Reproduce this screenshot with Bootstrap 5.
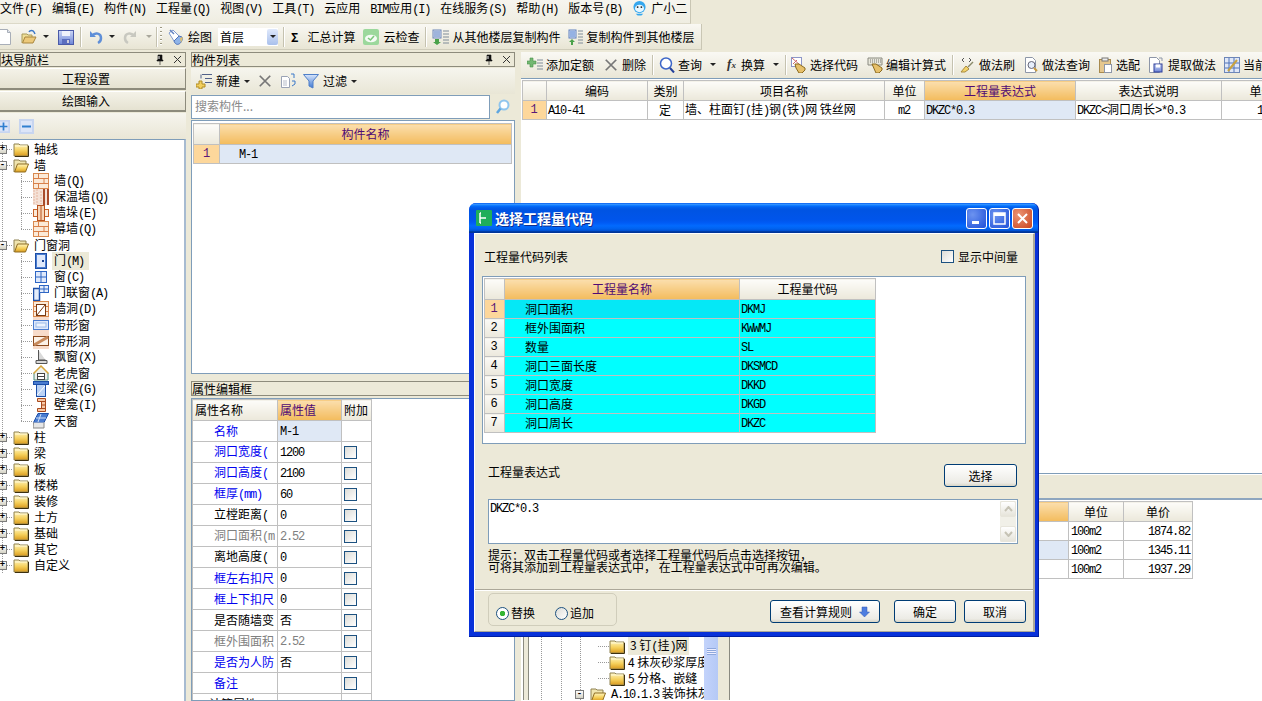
<!DOCTYPE html>
<html lang="zh">
<head>
<meta charset="utf-8">
<title>选择工程量代码</title>
<link href="https://cdn.jsdelivr.net/npm/bootstrap@5.3.0/dist/css/bootstrap.min.css" rel="stylesheet">
<style>
html,body{margin:0;height:701px;width:1262px;overflow:hidden}
body{background:#ece9d8;color:#000;font:12px/16px "Noto Sans CJK SC","Noto Sans CJK JP",sans-serif}
.la{font-family:"Liberation Mono",monospace;letter-spacing:-1.2px;font-size:12px}
svg{display:block;flex:none}
.defs{width:0;height:0;overflow:hidden}
.desk{height:701px;width:1262px;overflow:hidden}
.menubar{height:24px;width:691px;gap:10px;background:linear-gradient(#f6f5ef,#efede1);border-right:1px solid #c9c6b4;border-bottom:1px solid #dcd9c8;white-space:nowrap}
.tbar1{height:26px;width:702px;background:linear-gradient(#f9f8f3,#e8e5d4);border-right:1px solid #c9c6b4;border-bottom:1px solid #d0cdbb;white-space:nowrap}
.l2{margin-left:2px}.l3{margin-left:3px}.l4{margin-left:4px}.l5{margin-left:5px}.l6{margin-left:6px}.l7{margin-left:7px}.l8{margin-left:8px}.l9{margin-left:9px}.l10{margin-left:10px}.l11{margin-left:11px}.l14{margin-left:14px}.l20{margin-left:20px}
.n3{margin-left:-3px}
.tri{flex:none;width:0;height:0;border:3px solid transparent;border-top:3px solid #222;border-bottom:0}
.tri.off{border-top-color:#a9a79c}
.vsep{flex:none;width:2px;height:20px;border-left:1px solid #c5c2b0;border-right:1px solid #fff}
.grip{flex:none;width:2px;height:20px;background:repeating-linear-gradient(#9b9880 0 1px,#fff 1px 2px,transparent 2px 4px)}
.floorsel{width:60px;height:18px;background:#fff;padding-left:2px;flex:none}
.floorsel b{margin-left:auto;width:11px;height:16px;background:linear-gradient(#dfe8fb,#a9c0ec);border-radius:2px}
.main{height:649px;margin-top:2px}
.colL{width:186px;flex:none}
.colM{width:324px;flex:none;margin-left:5px}
.colR{flex:1 1 0;min-width:0;margin-left:6px}
.phd{height:15px;line-height:13px;border:1px solid #8d8b7c;background:#ece9d8;white-space:nowrap;overflow:hidden;flex:none}
.phd .pg{margin-left:auto;margin-right:3px}
.nbtn{height:22px;flex:none;width:186px;margin-top:1px;border:0;border-right:1px solid #8d8b7c;border-bottom:2px solid #8d8b7c;border-top:1px solid #fff;background:linear-gradient(#f4f2e8,#e5e2d1);font:inherit;line-height:18px;padding:0 13px 0 0;text-align:center}
.nbtn+.nbtn{height:21px}
.tool2{height:26px;flex:none;background:linear-gradient(#f6f5ee,#e9e6d6);margin-top:1px}
.treebox{border-top:1px solid #7f9db9;border-right:2px solid #a7bbd1;background:#fff;flex:1 1 0;min-height:0;overflow:hidden;padding-top:1px}
.tree{margin:0;padding:0;list-style:none;background:repeating-linear-gradient(0deg,#999 0 1px,transparent 1px 2px) 2px 0/1px 100% no-repeat}
.tw{height:16px;white-space:nowrap}
.exp{flex:none;width:9px;height:9px;margin-left:-2px;border:1px solid #7c7c7c;background:linear-gradient(#fff,#d5d3c5);font:700 9px/7px "Liberation Mono",monospace;text-align:center;color:#000}
.dash{flex:none;width:6px;height:1px;background:repeating-linear-gradient(90deg,#999 0 1px,transparent 1px 2px)}
.dash.dw{width:11px}
.cn{flex:none;width:12px;height:16px;margin-left:21px;background:repeating-linear-gradient(90deg,#999 0 1px,transparent 1px 2px) 0 8px/100% 1px no-repeat,repeating-linear-gradient(0deg,#999 0 1px,transparent 1px 2px) 0 0/1px 100% no-repeat}
.cn.end{background:repeating-linear-gradient(90deg,#999 0 1px,transparent 1px 2px) 0 8px/100% 1px no-repeat,repeating-linear-gradient(0deg,#999 0 1px,transparent 1px 2px) 0 0/1px 8px no-repeat}
.lbl{margin-left:5px}
.lbl.sel{background:#ecead8;margin-left:3px;padding:0 2px;width:37px}
.tw>svg+.root{margin-left:5px}
.gbox{border:1px solid #7f9db9;background:#fff;overflow:hidden}
table.xg{margin:0;width:1px;table-layout:fixed;border-collapse:collapse;--bs-table-bg:transparent;--bs-table-color:#000;color:#000}
table.xg th,table.xg td{padding:0 2px;border:1px solid #c0c0c0;font-weight:400;box-shadow:none;white-space:nowrap;overflow:hidden;line-height:14px;vertical-align:middle}
table.xg th{background:linear-gradient(#fdfcf9,#ebe8da);text-align:center}
table.xg th.act{background:linear-gradient(#fbdfae,#f3bb5c);color:#4f0a75}
table.xg td.num{background:linear-gradient(#fbfaf6,#ebe8dc);text-align:center;font-family:"Liberation Mono",monospace}
table.xg td.numa{background:#fdd79b;text-align:center;color:#5a1878;font-family:"Liberation Mono",monospace}
table.xg td.cur{background:#dfe8f5}
table.xg td.cy{background:#0ff}
table.xg td.cys{background:#05e8f6}
.pad1{padding-left:19px!important}
.pad2{padding-left:20px!important}
.srch{height:24px;flex:none;margin-top:1px}
.srch input{flex:1 1 0;height:24px;border:1px solid #7f9db9;border-radius:0;padding:0 3px 3px;font-size:12px;line-height:16px;min-height:0;box-shadow:none;color:#8a8a8a}
.srch input::placeholder{color:#8a8a8a}
.sbt{width:25px;flex:none}
.gridM{margin-top:1px;height:254px;flex:none;padding:2px 2px 0 1px}
.gridM table.xg th{height:21px}
.gridM table.xg td{height:19px}
.propbar{height:15px;margin-top:7px;flex:none;line-height:13px}
.gridP{margin-top:2px;flex:1 1 0;min-height:0;padding:0}
table.pt th,table.pt td{height:21px;padding:0 2px}
.nmc{display:block;width:61px;overflow:hidden;margin-left:19px}
.blue{color:#0000f0}
.gray{color:#808080}
input.xchk[type=checkbox]{flex:none;display:block;width:13px;height:13px;margin:0;border:1px solid #1c5180;border-radius:0;background:linear-gradient(135deg,#dcdcd7,#fff);box-shadow:none}
.rpane{height:422px;flex:none;overflow:hidden;border-bottom:1px solid #7f9db9;background:#fff}
.tool3{height:26px;flex:none;padding-bottom:2px;background:linear-gradient(#f9f8f3,#e9e6d6);white-space:nowrap;overflow:hidden;border-top:1px solid #f9f8f3}
.fxt{font:italic 700 13px/16px "Liberation Serif",serif;color:#333}
.fxt small{font-size:9px}
.gridR{border-width:1px 0 0;flex:1 1 0;padding:1px 0 0 1px;overflow:hidden}
.gridR table.xg th{height:20px}
.gridR table.xg td{height:19px;padding-left:1px}
.rlow{flex:1 1 0;min-height:0;overflow:hidden}
.lowbar{height:26px;flex:none;border-top:1px solid #fff;border-bottom:2px solid #8ea6bf;background:#ece9d8}
.lowmain{flex:1 1 0;min-height:0;background:#fff;overflow:hidden}
.ltree{flex:none;width:207px;background:#ece9d8;border-left:1px solid #8a8a80;margin-left:2px;height:200px;padding-left:2px}
.ltree2{flex:1 1 0;min-width:0;border-left:1px solid #8a8a80;background:#fff;margin-left:2px;padding-top:138px;overflow:hidden;background-image:repeating-linear-gradient(0deg,#999 0 1px,transparent 1px 2px),repeating-linear-gradient(0deg,#999 0 1px,transparent 1px 2px),repeating-linear-gradient(0deg,#999 0 1px,transparent 1px 2px);background-size:1px 100%;background-position:12px 0,32px 0,51px 0;background-repeat:no-repeat}
.ltw{height:16px;white-space:nowrap}
.ind1{margin-left:69px}
.ind2{margin-left:48px}
.lscroll{flex:none;width:14px;background:linear-gradient(90deg,#c3d3fb,#b5c9f6)}
.lscroll i{display:block;width:9px;height:7px;margin:148px auto 0;background:repeating-linear-gradient(#8ea8dc 0 1px,#eef 1px 2px)}
.lshade{flex:none;width:12px;background:#ece9d8;border-right:1px solid #8a8a80}
.lowtbl{padding-top:1px}
.lowtbl table.xg th{height:20px}
.lowtbl table.xg td{height:19px}
.tar{text-align:right}
/* dialog: a window over the desktop */
.dlg{position:absolute;left:469px;top:203px;width:570px;height:434px;background:#0831d9;border-radius:7px 7px 0 0;padding:0 3px 4px 5px;border-right:1px solid #001ea0;border-bottom:1px solid #001ea0}
.dlgt{height:30px;margin:0 -3px 0 -5px;padding:0 5px 0 7px;border-radius:7px 7px 0 0;background:linear-gradient(180deg,#0058ee 0,#3593ff 4%,#288eff 6%,#127dff 8%,#036ffc 10%,#0262ee 14%,#0057e5 20%,#0054e3 24%,#0055eb 56%,#005bf5 66%,#026afe 76%,#0062ef 86%,#0052d6 92%,#0040ab 94%,#003092 100%);color:#fff;font-weight:700;font-size:14px;line-height:18px;text-shadow:1px 1px 0 #0f2f8f}
.wb{width:21px;height:21px;border:1px solid #fff;border-radius:3px;background:radial-gradient(circle at 30% 30%,#6c93f0,#1f50d8);margin-left:2px;flex:none;display:flex;align-items:center;justify-content:center}
.wb.cl{background:radial-gradient(circle at 30% 30%,#ec9474,#c8431e)}
.dbody{height:399px;background:#ece9d8;border-top:1px solid #fff;border-left:1px solid #fff;border-right:2px solid #aca899;border-bottom:1px solid #aca899;padding:0 7px}
.drow1{height:42px;padding:16px 0 0 2px;line-height:14px;flex:none}
.chkrow{margin-right:8px}
.dgrid{height:168px;flex:none;padding:1px}
.dgrid table.xg th{height:21px}
.dgrid table.xg td{height:19px;padding-left:1px}
.drow2{height:55px;padding:20px 9px 12px 6px;flex:none}
.xbtn{font:inherit;color:#000;height:23px;padding:0;border:1px solid #003c74;border-radius:3px;background:linear-gradient(#fff,#ecebe5 85%,#d8d5c6);line-height:19px;display:flex;align-items:center;justify-content:center;flex:none}
.xbtn:hover{color:#000;background:linear-gradient(#fff,#ecebe5 85%,#d8d5c6);border-color:#003c74}
.w73{width:73px}.w110{width:110px}.w62{width:62px}
.expr{height:45px;flex:none;margin:0 8px 0 6px;border:1px solid #7f9db9;background:#fff}
.expr textarea{flex:1 1 0;border:0;border-radius:0;resize:none;padding:2px 1px;outline:0;box-shadow:none;background:transparent;height:100%;min-height:0;overflow:hidden;color:#000;line-height:14px}
.expr .vb{width:16px;flex:none;margin:1px;background:#f1f0e8}
.vb i{display:flex;align-items:center;justify-content:center;height:16px;background:linear-gradient(#fff,#e6e4da);border:1px solid #e7e5db;border-radius:2px}
.hint{margin:5px 0 0 6px;line-height:12px;flex:none}
.dfoot{margin:auto -7px 0;height:42px;flex:none;border-top:1px solid #aca899;box-shadow:inset 0 1px 0 #fff;padding:0 7px 0 13px}
.rgroup{width:129px;height:33px;margin-top:3px;border:1px solid #d0cdbb;border-radius:5px;padding:7px 0 0 7px}
.rgroup label{gap:2px}
.xrad{display:block;flex:none;margin:0;width:13px;height:13px;border:1px solid #1c5180;background:linear-gradient(135deg,#dcdcd7,#fff);box-shadow:none!important}
.form-check-input.xrad[type=radio]:checked{background:radial-gradient(circle,#35b534 0 2.5px,#fff 3px 100%);border-color:#1c5180}
.fb{margin-top:10px}
.clipl{margin-left:-12px}
</style>
</head>
<body>
<svg class="defs" xmlns="http://www.w3.org/2000/svg">
<defs>
<linearGradient id="gy" x1="0" y1="0" x2="0" y2="1"><stop offset="0" stop-color="#fff6c0"/><stop offset=".55" stop-color="#f5cf5a"/><stop offset="1" stop-color="#d99a1e"/></linearGradient>
<linearGradient id="gb" x1="0" y1="0" x2="0" y2="1"><stop offset="0" stop-color="#d9e6fb"/><stop offset="1" stop-color="#3f78d2"/></linearGradient>
<linearGradient id="gg" x1="0" y1="0" x2="0" y2="1"><stop offset="0" stop-color="#cfd8f5"/><stop offset="1" stop-color="#6c85d8"/></linearGradient>
<symbol id="fc" viewBox="0 0 16 15"><path d="M1 3V2h5l1 1h8v11H1z" fill="url(#gy)" stroke="#8f8253"/><path d="M2 4h12" stroke="#fff9d8"/><path d="M15.500 4v10.500H2" fill="none" stroke="#3c3010"/></symbol>
<symbol id="fo" viewBox="0 0 16 15"><path d="M1 14V2h5l1 1h6v3" fill="#f0e5b0" stroke="#8f8253"/><path d="M1.500 14 4.500 6h11l-3 8z" fill="url(#gy)" stroke="#8f6c20"/></symbol>
<symbol id="brk" viewBox="0 0 16 16"><rect x=".5" y=".5" width="15" height="15" fill="#fbead8" stroke="#d98a50"/><path d="M0 5.500h16M0 10.500h16M5.500 0v5M11 5.500v5M5.500 10.500v5" stroke="#d8804a"/></symbol>
<symbol id="ins" viewBox="0 0 16 16"><rect width="16" height="16" fill="#f4e1d6"/><path d="M1 1v14M4 0v16M8 2v13" stroke="#e6b6a0" stroke-dasharray="2 1"/><rect x="10" y="0" width="2" height="16" fill="#a84a2a"/><rect x="14" y="0" width="2" height="16" fill="#a84a2a"/></symbol>
<symbol id="pil" viewBox="0 0 16 16"><rect x=".5" y="4.500" width="15" height="7" fill="#fbead8" stroke="#c8642a"/><rect x="4.500" y=".5" width="7" height="15" fill="#f7d6b8" stroke="#b8521e"/><path d="M8 1v14" stroke="#b8521e"/></symbol>
<symbol id="door" viewBox="0 0 16 16"><rect x="2.500" y=".5" width="11" height="15" fill="url(#gb)" stroke="#1c4fa8"/><rect x="3.500" y="1.500" width="9" height="13" fill="#dfe9fb" stroke="#4a7cd0"/><rect x="9" y="7" width="2" height="2" fill="#16408f"/></symbol>
<symbol id="win" viewBox="0 0 16 16"><rect x="2.500" y="2.500" width="11" height="11" fill="#dfe9fb" stroke="#2e66c4"/><path d="M8 3v10M3 8h10" stroke="#2e66c4"/></symbol>
<symbol id="dwin" viewBox="0 0 16 16"><rect x=".5" y="3.500" width="6" height="12" fill="#e4edfb" stroke="#1c4fa8" stroke-width="1.500"/><rect x="6.500" y=".5" width="9" height="7" fill="#e4edfb" stroke="#2e66c4"/><path d="M11 1v6M7 4h8" stroke="#2e66c4"/></symbol>
<symbol id="hole" viewBox="0 0 16 16"><rect x=".5" y=".5" width="15" height="15" fill="#fbead8" stroke="#d98a50"/><path d="M0 5.500h3M13 5.500h3M0 10.500h3M13 10.500h3" stroke="#d8804a"/><rect x="3.500" y="3.500" width="9" height="11" fill="#fff" stroke="#7a3a12"/><path d="M4 14 12 4" stroke="#7a3a12"/></symbol>
<symbol id="stw" viewBox="0 0 16 16"><rect y="0" width="16" height="16" fill="#f7dccb"/><rect x=".5" y="3.500" width="15" height="9" fill="#dfe9fb" stroke="#4a7cd0"/><rect x="3" y="6" width="10" height="4" fill="#eef4fe" stroke="#9cbcea"/></symbol>
<symbol id="sth" viewBox="0 0 16 16"><rect y="0" width="16" height="16" fill="#f7dccb"/><rect x=".5" y="3.500" width="15" height="9" fill="#fbf2e8" stroke="#8a4a1e"/><path d="M1 12 15 4" stroke="#c78a5c" stroke-width="3"/></symbol>
<symbol id="bay" viewBox="0 0 16 16"><path d="M5.500 1v10h7M3 11.500h11v3H3z" fill="#d9d9d9" stroke="#555"/></symbol>
<symbol id="dor" viewBox="0 0 16 16"><path d="M8 1 1 8v7h14V8z" fill="#eef1ee" stroke="#4d8a7a"/><path d="M.5 8.500 8 1l7.500 7.500" fill="none" stroke="#d7a53a" stroke-width="1.500"/><rect x="4.500" y="8.500" width="7" height="6" fill="#fff" stroke="#444"/><path d="M5 11.500h6" stroke="#444"/></symbol>
<symbol id="lin" viewBox="0 0 16 16"><rect x=".5" y=".5" width="15" height="3" fill="#4a7cd0" stroke="#1c4fa8"/><rect x="3.500" y="3.500" width="9" height="12" fill="#bcd3f5" stroke="#1c4fa8"/><path d="M4 14 12 5" stroke="#fff"/></symbol>
<symbol id="nic" viewBox="0 0 16 16"><path d="M4.500 1.500h8v13h-8v-3h4v-7h-4z" fill="#f7c9a6" stroke="#a84a1e"/><path d="M8 4.500h4M8 8h4M8 11.500h4" stroke="#a84a1e"/></symbol>
<symbol id="sky" viewBox="0 0 16 16"><path d="M5 .5h10.500L11 9.500H.5z" fill="#4a7cd0" stroke="#1c4fa8"/><path d="M8 1 5 9M3 5h10" stroke="#cfe0f8"/><path d="M.5 9.500 0 15h11l0-5.500" fill="#e6e6e6" stroke="#888"/></symbol>
<symbol id="xg" viewBox="0 0 16 16"><path d="M2 2l12 12M14 2 2 14" stroke="#777" stroke-width="2"/></symbol>
<symbol id="mag" viewBox="0 0 16 16"><circle cx="7" cy="6.500" r="5.500" fill="#fff" stroke="#3d66c8" stroke-width="1.500"/><path d="M11 11l4 4.500" stroke="#24419a" stroke-width="2"/></symbol>
<symbol id="hand" viewBox="0 0 16 16"><rect x=".5" y=".5" width="10" height="9" fill="#fff" stroke="#8d96c8"/><path d="M1 1l8 7M2 7l4-4" stroke="#d06a6a"/><path d="M4 7l4 0 6 4v2l-3 3H8L5 11z" fill="#e7c06a" stroke="#8a6a1e"/></symbol>
<symbol id="keyb" viewBox="0 0 16 16"><path d="M1 1h14v7H1z" fill="#e9e8dc" stroke="#8a8a80"/><path d="M3 3h1M5 3h1M7 3h1M9 3h1M11 3h1M13 3h1M3 5h1M5 5h1M7 5h1M9 5h1M11 5h1M13 5h1" stroke="#777"/><path d="M5 7l4 0 6 4v2l-3 3H9z" fill="#e7c06a" stroke="#8a6a1e"/></symbol>
<symbol id="brush" viewBox="0 0 16 16"><path d="M5 1 3 3l2 2M10 1l2 2-2 2" fill="none" stroke="#555"/><path d="M7 9l3 3-4 3-4 0z" fill="#f3d36a" stroke="#a88a3e"/><path d="M9 10l5-5" stroke="#8a8a6a" stroke-width="1.500"/></symbol>
<symbol id="dm" viewBox="0 0 16 16"><path d="M2.500.5h7l3 3v12h-10z" fill="#fff" stroke="#8d96a8"/><circle cx="8.500" cy="8" r="3.500" fill="#e6eefb" stroke="#667"/><path d="M11 11l3 3" stroke="#c89a3e" stroke-width="2"/></symbol>
<symbol id="clip" viewBox="0 0 16 16"><rect x="2.500" y="2.500" width="11" height="13" fill="#e5c78e" stroke="#a88a4e"/><rect x="5" y="1" width="6" height="3" fill="#eee" stroke="#777"/><rect x="7.500" y="7.500" width="7" height="8" fill="#fff" stroke="#8d96a8"/></symbol>
<symbol id="dd" viewBox="0 0 16 16"><path d="M1.500.5h7l3 3v12h-10z" fill="#fff" stroke="#8d96a8"/><rect x="6" y="7" width="8" height="8" fill="url(#gg)" stroke="#2e3f9a"/><rect x="8" y="7.500" width="4" height="3" fill="#fff"/><path d="M11 1l3 0v3" fill="none" stroke="#8d96a8"/></symbol>
<symbol id="gridi" viewBox="0 0 16 16"><rect x=".5" y=".5" width="15" height="15" fill="#dfe7f7" stroke="#6d86b8"/><path d="M1 6h14M1 11h14M5 1v14M10 1v14" stroke="#4f73b8"/><path d="M4 14 13 3" stroke="#c9a33e" stroke-width="2"/></symbol>
<symbol id="addq" viewBox="0 0 16 16"><path d="M10 3h6M10 6h6M10 9h6M10 12h6" stroke="#7f8c98"/><path d="M3 1h3v3h3v3H6v3H3V7H0V4h3z" fill="#73b873" stroke="#4a924c" stroke-width=".6"/></symbol>
<symbol id="addy" viewBox="0 0 16 16"><path d="M6 1.500h10M9 5.500h7M9 9.500h7" stroke="#52628a"/><path d="M5 1.500v4" stroke="#52628a"/><path d="M3 8h3v3h3v3H6v2H3v-2H0v-3h3z" fill="#f2cf5e" stroke="#b08c25"/></symbol>
<symbol id="cop" viewBox="0 0 16 16"><path d="M1.500 3.500h6l2 2v9h-8z" fill="#fff" stroke="#9aa3b5"/><path d="M3 8h4M3 10h4M3 12h4" stroke="#b6bcc9"/><path d="M11 1h3v4M12 8h3v3l-3 2" fill="none" stroke="#3b78c8"/></symbol>
<symbol id="fun" viewBox="0 0 16 16"><path d="M.5 1.500h15L10 8v7l-4-2V8z" fill="url(#gb)" stroke="#4f7fc8"/></symbol>
<symbol id="doc" viewBox="0 0 16 16"><path d="M2.500.5h8l3 3v12h-11z" fill="#fff" stroke="#a8aeb8"/><path d="M10.500.5v3h3" fill="#dfe4ee" stroke="#a8aeb8"/></symbol>
<symbol id="ofo" viewBox="0 0 16 16"><path d="M1 14V5h5l1 1h4v2" fill="#efdf98" stroke="#a89a5a"/><path d="M1.500 14 4 8h11l-3 6z" fill="#ecc97a" stroke="#a8863e"/><path d="M8 3c1-2 4-2 5 0l1 2" fill="none" stroke="#3b78c8" stroke-width="1.500"/></symbol>
<symbol id="sav" viewBox="0 0 16 16"><rect x=".5" y="1.500" width="15" height="14" fill="url(#gg)" stroke="#4a5aa8"/><rect x="4" y="2" width="8" height="5" fill="#f0f2fb"/><rect x="4" y="10" width="8" height="5" fill="#5a6dbe"/><rect x="9" y="11" width="2" height="3" fill="#ccd"/></symbol>
<symbol id="und" viewBox="0 0 16 16"><path d="M2 2v6h6z" fill="#5f8fd8"/><path d="M4 7c3-4 9-3 9 2 0 2-1 4-3 5" fill="none" stroke="#5f8fd8" stroke-width="2.500"/></symbol>
<symbol id="red" viewBox="0 0 16 16"><path d="M14 2v6H8z" fill="#c8c8c0"/><path d="M12 7C9 3 3 4 3 9c0 2 1 4 3 5" fill="none" stroke="#c8c8c0" stroke-width="2.500"/></symbol>
<symbol id="pnt" viewBox="0 0 16 16"><path d="M1 4l4-3 6 6-5 5z" fill="#fff" stroke="#7f9ad0"/><path d="M2 1l4 4" stroke="#5f80c0" stroke-width="1.500"/><path d="M6 12l5-5 3 1c1 3-1 6-3 7-2 1-4 0-5-3z" fill="#8fb4e8" stroke="#4f73b8"/><path d="M12 9l3-1-2 6" fill="#e5c26a"/></symbol>
<symbol id="cld" viewBox="0 0 16 16"><rect width="16" height="16" rx="2" fill="#9cd89c"/><ellipse cx="8" cy="9.500" rx="6" ry="3.800" fill="#f5fbf5"/><path d="M5 9l2.500 2L11 7" fill="none" stroke="#7cc87c" stroke-width="1.600"/></symbol>
<symbol id="cpf" viewBox="0 0 18 16"><rect x="1" y="1" width="8" height="8" fill="#dfe7f7" stroke="#6d86b8"/><path d="M2 3h6M2 5h6M2 7h6" stroke="#5f80c0"/><path d="M11 2h6M11 5h6M11 8h6M11 11h6M11 14h6" stroke="#7f8c98"/><path d="M3 10h4v3h2l-4 3-4-3h2z" fill="#4aa24a"/></symbol>
<symbol id="cpt" viewBox="0 0 16 16"><rect x="1" y="1" width="7" height="8" fill="#dfe7f7" stroke="#5f80c0"/><path d="M2 3h5M2 5h5M2 7h5" stroke="#4a7cd0"/><path d="M10 2h5M10 5h5M10 8h5M10 11h5M10 14h5" stroke="#7f8c98"/><path d="M3 16v-3H1l3-3 3 3H5v3z" fill="#4aa24a"/></symbol>
<symbol id="mas" viewBox="0 0 16 16"><circle cx="8" cy="7" r="6.500" fill="#35a7ee"/><ellipse cx="8" cy="8.500" rx="4.800" ry="4" fill="#e8f7ff"/><circle cx="6" cy="7" r="1" fill="#222"/><circle cx="10" cy="7" r="1" fill="#222"/><path d="M4 14h8l-2 2H6z" fill="#35a7ee"/></symbol>
<symbol id="pin" viewBox="0 0 10 11"><path d="M3 1h4v5H3zM2 6h6v1H2zM5 7v4" fill="#111" stroke="#111" stroke-width=".6"/><path d="M4 2v3" stroke="#fff"/></symbol>
<symbol id="cx" viewBox="0 0 9 9"><path d="M1 1l7 7M8 1 1 8" stroke="#333"/></symbol>
<symbol id="smag" viewBox="0 0 16 16"><circle cx="9" cy="6" r="4.500" fill="#fff" stroke="#8fc5ee" stroke-width="2"/><path d="M5.500 9.500 2 14" stroke="#5fa6e0" stroke-width="2.500"/></symbol>
<symbol id="plus" viewBox="0 0 15 15"><rect width="15" height="15" fill="#c7d5f0"/><rect x="2" y="2" width="11" height="11" fill="#dce5f8"/><path d="M3 7.500h9M7.500 3v9" stroke="#2f7fd0" stroke-width="2"/></symbol>
<symbol id="minus" viewBox="0 0 15 15"><rect width="15" height="15" fill="#c7d5f0"/><rect x="2" y="2" width="11" height="11" fill="#dce5f8"/><path d="M3 7.500h9" stroke="#2f7fd0" stroke-width="2"/></symbol>
</defs>
</svg>

<div class="desk d-flex flex-column">
  <div class="menubar d-flex align-items-start">
    <span>文件<span class="la">(F)</span></span><span>编辑<span class="la">(E)</span></span><span>构件<span class="la">(N)</span></span><span>工程量<span class="la">(Q)</span></span><span>视图<span class="la">(V)</span></span><span>工具<span class="la">(T)</span></span><span>云应用</span><span><span class="la">BIM</span>应用<span class="la">(I)</span></span><span>在线服务<span class="la">(S)</span></span><span>帮助<span class="la">(H)</span></span><span>版本号<span class="la">(B)</span></span>
    <span class="d-flex align-items-center gap-1"><svg width="15" height="16"><use href="#mas"/></svg>广小二</span>
  </div>
  <div class="tbar1 d-flex align-items-center">
    <svg class="n3" width="16" height="16"><use href="#doc"/></svg>
    <svg class="l8" width="16" height="16"><use href="#ofo"/></svg><i class="tri l6"></i>
    <svg class="l9" width="16" height="16"><use href="#sav"/></svg>
    <i class="vsep l6"></i>
    <svg class="l6" width="16" height="16"><use href="#und"/></svg><i class="tri l5"></i>
    <svg class="l7" width="16" height="16"><use href="#red"/></svg><i class="tri off l8"></i>
    <i class="vsep l4"></i><i class="grip l2"></i>
    <svg class="l6" width="16" height="16"><use href="#pnt"/></svg><span class="l4">绘图</span>
    <div class="floorsel d-flex align-items-center l6">首层<b class="d-flex align-items-center justify-content-center"><i class="tri"></i></b></div>
    <i class="vsep l5"></i>
    <span class="l6 fw-bold">Σ</span><span class="l9">汇总计算</span>
    <svg class="l8" width="16" height="16"><use href="#cld"/></svg><span class="l4">云检查</span>
    <i class="vsep l6"></i>
    <svg class="l5" width="18" height="16"><use href="#cpf"/></svg><span class="l2">从其他楼层复制构件</span>
    <svg class="l7" width="16" height="16"><use href="#cpt"/></svg><span class="l3">复制构件到其他楼层</span>
  </div>

  <div class="main d-flex">
    <!-- left -->
    <div class="colL d-flex flex-column">
      <div class="phd d-flex"><span class="clipl">模块导航栏</span><span class="pg d-flex align-items-center gap-2"><svg width="10" height="11"><use href="#pin"/></svg><svg width="9" height="9"><use href="#cx"/></svg></span></div>
      <button class="nbtn" type="button">工程设置</button>
      <button class="nbtn" type="button">绘图输入</button>
      <div class="tool2 d-flex align-items-center"><svg class="n3" width="13" height="15"><use href="#plus"/></svg><svg class="l9" width="15" height="15"><use href="#minus"/></svg></div>
      <div class="treebox">
        <ul class="tree">
          <li class="tw d-flex align-items-center"><span class="exp">+</span><i class="dash"></i><svg width="16" height="15"><use href="#fc"/></svg><span class="root">轴线</span></li>
          <li class="tw d-flex align-items-center"><span class="exp">-</span><i class="dash"></i><svg width="16" height="15"><use href="#fo"/></svg><span class="root">墙</span></li>
          <li class="tw d-flex align-items-center"><i class="cn"></i><svg width="16" height="16"><use href="#brk"/></svg><span class="lbl">墙<span class="la">(Q)</span></span></li>
          <li class="tw d-flex align-items-center"><i class="cn"></i><svg width="16" height="16"><use href="#ins"/></svg><span class="lbl">保温墙<span class="la">(Q)</span></span></li>
          <li class="tw d-flex align-items-center"><i class="cn"></i><svg width="16" height="16"><use href="#pil"/></svg><span class="lbl">墙垛<span class="la">(E)</span></span></li>
          <li class="tw d-flex align-items-center"><i class="cn end"></i><svg width="16" height="16"><use href="#brk"/></svg><span class="lbl">幕墙<span class="la">(Q)</span></span></li>
          <li class="tw d-flex align-items-center"><span class="exp">-</span><i class="dash"></i><svg width="16" height="15"><use href="#fo"/></svg><span class="root">门窗洞</span></li>
          <li class="tw d-flex align-items-center"><i class="cn"></i><svg width="16" height="16"><use href="#door"/></svg><span class="lbl sel">门<span class="la">(M)</span></span></li>
          <li class="tw d-flex align-items-center"><i class="cn"></i><svg width="16" height="16"><use href="#win"/></svg><span class="lbl">窗<span class="la">(C)</span></span></li>
          <li class="tw d-flex align-items-center"><i class="cn"></i><svg width="16" height="16"><use href="#dwin"/></svg><span class="lbl">门联窗<span class="la">(A)</span></span></li>
          <li class="tw d-flex align-items-center"><i class="cn"></i><svg width="16" height="16"><use href="#hole"/></svg><span class="lbl">墙洞<span class="la">(D)</span></span></li>
          <li class="tw d-flex align-items-center"><i class="cn"></i><svg width="16" height="16"><use href="#stw"/></svg><span class="lbl">带形窗</span></li>
          <li class="tw d-flex align-items-center"><i class="cn"></i><svg width="16" height="16"><use href="#sth"/></svg><span class="lbl">带形洞</span></li>
          <li class="tw d-flex align-items-center"><i class="cn"></i><svg width="16" height="16"><use href="#bay"/></svg><span class="lbl">飘窗<span class="la">(X)</span></span></li>
          <li class="tw d-flex align-items-center"><i class="cn"></i><svg width="16" height="16"><use href="#dor"/></svg><span class="lbl">老虎窗</span></li>
          <li class="tw d-flex align-items-center"><i class="cn"></i><svg width="16" height="16"><use href="#lin"/></svg><span class="lbl">过梁<span class="la">(G)</span></span></li>
          <li class="tw d-flex align-items-center"><i class="cn"></i><svg width="16" height="16"><use href="#nic"/></svg><span class="lbl">壁龛<span class="la">(I)</span></span></li>
          <li class="tw d-flex align-items-center"><i class="cn end"></i><svg width="16" height="16"><use href="#sky"/></svg><span class="lbl">天窗</span></li>
          <li class="tw d-flex align-items-center"><span class="exp">+</span><i class="dash"></i><svg width="16" height="15"><use href="#fc"/></svg><span class="root">柱</span></li>
          <li class="tw d-flex align-items-center"><span class="exp">+</span><i class="dash"></i><svg width="16" height="15"><use href="#fc"/></svg><span class="root">梁</span></li>
          <li class="tw d-flex align-items-center"><span class="exp">+</span><i class="dash"></i><svg width="16" height="15"><use href="#fc"/></svg><span class="root">板</span></li>
          <li class="tw d-flex align-items-center"><span class="exp">+</span><i class="dash"></i><svg width="16" height="15"><use href="#fc"/></svg><span class="root">楼梯</span></li>
          <li class="tw d-flex align-items-center"><span class="exp">+</span><i class="dash"></i><svg width="16" height="15"><use href="#fc"/></svg><span class="root">装修</span></li>
          <li class="tw d-flex align-items-center"><span class="exp">+</span><i class="dash"></i><svg width="16" height="15"><use href="#fc"/></svg><span class="root">土方</span></li>
          <li class="tw d-flex align-items-center"><span class="exp">+</span><i class="dash"></i><svg width="16" height="15"><use href="#fc"/></svg><span class="root">基础</span></li>
          <li class="tw d-flex align-items-center"><span class="exp">+</span><i class="dash"></i><svg width="16" height="15"><use href="#fc"/></svg><span class="root">其它</span></li>
          <li class="tw d-flex align-items-center"><span class="exp">+</span><i class="dash"></i><svg width="16" height="15"><use href="#fc"/></svg><span class="root">自定义</span></li>
        </ul>
      </div>
    </div>

    <!-- middle -->
    <div class="colM d-flex flex-column">
      <div class="phd d-flex"><span>构件列表</span><span class="pg d-flex align-items-center gap-2"><svg width="10" height="11"><use href="#pin"/></svg><svg width="9" height="9"><use href="#cx"/></svg></span></div>
      <div class="tool2 d-flex align-items-center">
        <svg class="l5" width="16" height="16"><use href="#addy"/></svg><span class="l4">新建</span><i class="tri l4"></i>
        <svg class="l8" width="14" height="14"><use href="#xg"/></svg>
        <svg class="l8" width="16" height="16"><use href="#cop"/></svg>
        <svg class="l7" width="16" height="16"><use href="#fun"/></svg><span class="l4">过滤</span><i class="tri l4"></i>
      </div>
      <div class="srch d-flex">
        <input class="form-control" type="text" placeholder="搜索构件..." aria-label="搜索构件">
        <div class="sbt d-flex align-items-center justify-content-center"><svg width="16" height="16"><use href="#smag"/></svg></div>
      </div>
      <div class="gbox gridM">
        <table class="table xg">
          <colgroup><col width="26"><col width="292"></colgroup>
          <thead><tr><th></th><th class="act">构件名称</th></tr></thead>
          <tbody><tr><td class="numa">1</td><td class="cur pad1"><span class="la">M-1</span></td></tr></tbody>
        </table>
      </div>
      <div class="phd propbar"><span>属性编辑框</span></div>
      <div class="gbox gridP">
        <table class="table xg pt">
          <colgroup><col width="85"><col width="64"><col width="30"></colgroup>
          <thead><tr><th class="text-start">属性名称</th><th class="act text-start">属性值</th><th class="text-start">附加</th></tr></thead>
          <tbody>
            <tr><td><span class="nmc blue">名称</span></td><td class="cur"><span class="la">M-1</span></td><td></td></tr>
            <tr><td><span class="nmc blue">洞口宽度<span class="la">(</span></span></td><td><span class="la">1200</span></td><td><input class="form-check-input xchk" type="checkbox" aria-label="附加"></td></tr>
            <tr><td><span class="nmc blue">洞口高度<span class="la">(</span></span></td><td><span class="la">2100</span></td><td><input class="form-check-input xchk" type="checkbox" aria-label="附加"></td></tr>
            <tr><td><span class="nmc blue">框厚<span class="la">(mm)</span></span></td><td><span class="la">60</span></td><td><input class="form-check-input xchk" type="checkbox" aria-label="附加"></td></tr>
            <tr><td><span class="nmc">立樘距离<span class="la">(</span></span></td><td><span class="la">0</span></td><td><input class="form-check-input xchk" type="checkbox" aria-label="附加"></td></tr>
            <tr><td><span class="nmc gray">洞口面积<span class="la">(m</span></span></td><td class="gray"><span class="la">2.52</span></td><td><input class="form-check-input xchk" type="checkbox" aria-label="附加"></td></tr>
            <tr><td><span class="nmc">离地高度<span class="la">(</span></span></td><td><span class="la">0</span></td><td><input class="form-check-input xchk" type="checkbox" aria-label="附加"></td></tr>
            <tr><td><span class="nmc blue">框左右扣尺</span></td><td><span class="la">0</span></td><td><input class="form-check-input xchk" type="checkbox" aria-label="附加"></td></tr>
            <tr><td><span class="nmc blue">框上下扣尺</span></td><td><span class="la">0</span></td><td><input class="form-check-input xchk" type="checkbox" aria-label="附加"></td></tr>
            <tr><td><span class="nmc">是否随墙变</span></td><td>否</td><td><input class="form-check-input xchk" type="checkbox" aria-label="附加"></td></tr>
            <tr><td><span class="nmc gray">框外围面积</span></td><td class="gray"><span class="la">2.52</span></td><td><input class="form-check-input xchk" type="checkbox" aria-label="附加"></td></tr>
            <tr><td><span class="nmc blue">是否为人防</span></td><td>否</td><td><input class="form-check-input xchk" type="checkbox" aria-label="附加"></td></tr>
            <tr><td><span class="nmc blue">备注</span></td><td></td><td><input class="form-check-input xchk" type="checkbox" aria-label="附加"></td></tr>
            <tr><td><span class="d-flex align-items-center"><span class="exp l3">+</span><span class="l7">计算属性</span></span></td><td></td><td></td></tr>
          </tbody>
        </table>
      </div>
    </div>

    <!-- right -->
    <div class="colR d-flex flex-column">
      <div class="rpane d-flex flex-column">
        <div class="tool3 d-flex align-items-center">
          <svg class="l6" width="16" height="16"><use href="#addq"/></svg><span class="l3">添加定额</span>
          <svg class="l10" width="14" height="14"><use href="#xg"/></svg><span class="l4">删除</span>
          <i class="vsep l6"></i>
          <svg class="l5" width="16" height="16"><use href="#mag"/></svg><span class="l3">查询</span><i class="tri l8"></i>
          <span class="l11 fxt">f<small>x</small></span><span class="l5">换算</span><i class="tri l8"></i>
          <i class="vsep l6"></i>
          <svg class="l4" width="16" height="16"><use href="#hand"/></svg><span class="l3">选择代码</span>
          <svg class="l9" width="16" height="16"><use href="#keyb"/></svg><span class="l3">编辑计算式</span>
          <i class="vsep l6"></i>
          <svg class="l5" width="16" height="16"><use href="#brush"/></svg><span class="l4">做法刷</span>
          <svg class="l8" width="16" height="16"><use href="#dm"/></svg><span class="l3">做法查询</span>
          <svg class="l7" width="16" height="16"><use href="#clip"/></svg><span class="l3">选配</span>
          <svg class="l8" width="16" height="16"><use href="#dd"/></svg><span class="l4">提取做法</span>
          <svg class="l8" width="16" height="16"><use href="#gridi"/></svg><span class="l3">当前构件</span>
        </div>
        <div class="gbox gridR">
          <table class="table xg">
            <colgroup><col width="24"><col width="101"><col width="36"><col width="201"><col width="40"><col width="151"><col width="146"><col width="80"></colgroup>
            <thead><tr><th></th><th>编码</th><th>类别</th><th>项目名称</th><th>单位</th><th class="act">工程量表达式</th><th>表达式说明</th><th>单价</th></tr></thead>
            <tbody><tr><td class="numa">1</td><td><span class="la">A10-41</span></td><td class="text-center">定</td><td>墙、柱面钉<span class="la">(</span>挂<span class="la">)</span>钢<span class="la">(</span>铁<span class="la">)</span>网 铁丝网</td><td class="text-center"><span class="la">m2</span></td><td class="cur"><span class="la">DKZC*0.3</span></td><td><span class="la">DKZC&lt;</span>洞口周长<span class="la">&gt;*0.3</span></td><td class="tar"><span class="la">1937.29</span></td></tr></tbody>
          </table>
        </div>
      </div>
      <div class="rlow d-flex flex-column">
        <div class="lowbar"></div>
        <div class="lowmain d-flex">
          <div class="ltree d-flex">
            <div class="ltree2">
              <div class="ltw d-flex align-items-center ind1"><i class="dash dw"></i><svg width="16" height="15"><use href="#fc"/></svg><span class="lbl sel w-auto">3 钉<span class="la">(</span>挂<span class="la">)</span>网</span></div>
              <div class="ltw d-flex align-items-center ind1"><i class="dash dw"></i><svg width="16" height="15"><use href="#fc"/></svg><span class="l3">4 抹灰砂浆厚度</span></div>
              <div class="ltw d-flex align-items-center ind1"><i class="dash dw"></i><svg width="16" height="15"><use href="#fc"/></svg><span class="l3">5 分格、嵌缝</span></div>
              <div class="ltw d-flex align-items-center ind2"><span class="exp">-</span><svg class="l6" width="16" height="15"><use href="#fo"/></svg><span class="l5"><span class="la">A.10.1.3</span> 装饰抹灰</span></div>
            </div>
            <div class="lscroll"><i></i></div>
            <div class="lshade"></div>
          </div>
          <div class="lowtbl">
            <table class="table xg">
              <colgroup><col width="338"><col width="55"><col width="69"></colgroup>
              <thead><tr><th class="act">工程量</th><th>单位</th><th>单价</th></tr></thead>
              <tbody>
                <tr><td></td><td><span class="la">100m2</span></td><td class="tar"><span class="la">1874.82</span></td></tr>
                <tr><td class="cur"></td><td><span class="la">100m2</span></td><td class="tar"><span class="la">1345.11</span></td></tr>
                <tr><td></td><td><span class="la">100m2</span></td><td class="tar"><span class="la">1937.29</span></td></tr>
              </tbody>
            </table>
          </div>
        </div>
      </div>
    </div>
  </div>
</div>

<div class="dlg" role="dialog" aria-label="选择工程量代码">
  <div class="dlgt d-flex align-items-center">
    <svg width="16" height="16" viewBox="0 0 16 16"><rect width="16" height="16" rx="1" fill="#1fae5a"/><path d="M4 3v10M4 8h6M4 3h1M4 13h1" stroke="#fff" stroke-width="1.500" fill="none"/></svg>
    <span class="l3">选择工程量代码</span>
    <div class="ms-auto d-flex">
      <span class="wb"><svg width="11" height="11" viewBox="0 0 11 11"><rect x="1" y="8" width="7" height="3" fill="#fff"/></svg></span>
      <span class="wb"><svg width="13" height="13" viewBox="0 0 13 13"><rect x="1" y="1" width="11" height="11" fill="none" stroke="#fff" stroke-width="1.500"/><rect x="1" y="1" width="11" height="3" fill="#fff"/></svg></span>
      <span class="wb cl"><svg width="11" height="11" viewBox="0 0 11 11"><path d="M1 1l9 9M10 1l-9 9" stroke="#fff" stroke-width="2"/></svg></span>
    </div>
  </div>
  <div class="dbody d-flex flex-column">
    <div class="drow1 d-flex justify-content-between">
      <span>工程量代码列表</span>
      <label class="chkrow d-flex align-items-start gap-1"><input class="form-check-input xchk" type="checkbox">显示中间量</label>
    </div>
    <div class="gbox dgrid">
      <table class="table xg">
        <colgroup><col width="20"><col width="235"><col width="136"></colgroup>
        <thead><tr><th></th><th class="act">工程量名称</th><th>工程量代码</th></tr></thead>
        <tbody>
          <tr><td class="numa">1</td><td class="cys pad2">洞口面积</td><td class="cy"><span class="la">DKMJ</span></td></tr>
          <tr><td class="num">2</td><td class="cy pad2">框外围面积</td><td class="cy"><span class="la">KWWMJ</span></td></tr>
          <tr><td class="num">3</td><td class="cy pad2">数量</td><td class="cy"><span class="la">SL</span></td></tr>
          <tr><td class="num">4</td><td class="cy pad2">洞口三面长度</td><td class="cy"><span class="la">DKSMCD</span></td></tr>
          <tr><td class="num">5</td><td class="cy pad2">洞口宽度</td><td class="cy"><span class="la">DKKD</span></td></tr>
          <tr><td class="num">6</td><td class="cy pad2">洞口高度</td><td class="cy"><span class="la">DKGD</span></td></tr>
          <tr><td class="num">7</td><td class="cy pad2">洞口周长</td><td class="cy"><span class="la">DKZC</span></td></tr>
        </tbody>
      </table>
    </div>
    <div class="drow2 d-flex justify-content-between">
      <span class="mt-n1">工程量表达式</span>
      <button class="btn xbtn w73" type="button">选择</button>
    </div>
    <div class="expr d-flex">
      <textarea class="form-control la" aria-label="工程量表达式">DKZC*0.3</textarea>
      <div class="vb d-flex flex-column justify-content-between">
        <i><svg width="9" height="6" viewBox="0 0 9 6"><path d="M1 5l3.500-4L8 5" fill="none" stroke="#c6c3b5" stroke-width="2"/></svg></i>
        <i><svg width="9" height="6" viewBox="0 0 9 6"><path d="M1 1l3.500 4L8 1" fill="none" stroke="#c6c3b5" stroke-width="2"/></svg></i>
      </div>
    </div>
    <div class="hint">提示：双击工程量代码或者选择工程量代码后点击选择按钮，<br>可将其添加到工程量表达式中， 在工程量表达式中可再次编辑。</div>
    <div class="dfoot d-flex">
      <div class="rgroup d-flex">
        <label class="d-flex align-items-center"><input class="form-check-input xrad" type="radio" name="m" checked>替换</label>
        <label class="d-flex align-items-center l20"><input class="form-check-input xrad" type="radio" name="m">追加</label>
      </div>
      <button class="btn xbtn w110 fb ms-auto" type="button">查看计算规则<svg class="l7" width="11" height="11" viewBox="0 0 11 11"><path d="M3 1h5v5h2.500l-5 5-5-5H3z" fill="#4e7de0" stroke="#3458b0" stroke-width=".5"/></svg></button>
      <button class="btn xbtn w62 fb l14" type="button">确定</button>
      <button class="btn xbtn w62 fb l8" type="button">取消</button>
    </div>
  </div>
</div>
<script src="https://cdn.jsdelivr.net/npm/bootstrap@5.3.0/dist/js/bootstrap.bundle.min.js"></script>
</body>
</html>
